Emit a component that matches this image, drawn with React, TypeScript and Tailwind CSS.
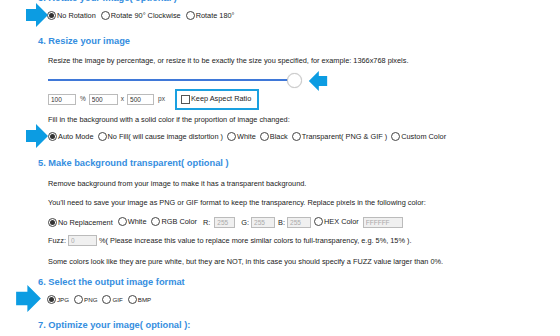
import React from 'react';

const Arrow: React.FC<{ className: string; flip?: boolean }> = ({ className, flip }) => (
  <svg viewBox="0 0 22 24" className={`absolute ${className}`} style={flip ? { transform: 'scaleX(-1)' } : undefined}>
    <polygon points="0,6 10,6 10,0 22,12 10,24 10,18 0,18" fill="#0c9ce2" />
  </svg>
);

const Radio: React.FC<{ checked?: boolean }> = ({ checked }) => (
  <span className="inline-flex w-[9px] h-[9px] rounded-full border border-[#444] items-center justify-center shrink-0 bg-white">
    {checked && <span className="w-[5px] h-[5px] rounded-full bg-[#333]" />}
  </span>
);

const Opt: React.FC<{ checked?: boolean; label: string; small?: boolean }> = ({ checked, label, small }) => (
  <span className="inline-flex items-center gap-[1px]">
    <Radio checked={checked} />
    <span className={small ? 'text-[6.2px]' : ''}>{label}</span>
  </span>
);

const Box: React.FC<{ value: string; w: string; disabled?: boolean }> = ({ value, w, disabled }) => (
  <input
    readOnly
    value={value}
    className={`${w} h-[11px] border border-[#bbb] px-[2px] text-[6.5px] outline-none ${disabled ? 'bg-[#f0f0f0] text-[#aaa]' : 'bg-white text-[#333]'}`}
  />
);

const H: React.FC<{ children: React.ReactNode; mt: string }> = ({ children, mt }) => (
  <div className={`${mt} h-[12px] flex items-center text-[9.3px] font-bold text-[#358ee0] whitespace-nowrap`}>{children}</div>
);

const T: React.FC<{ children: React.ReactNode; mt: string }> = ({ children, mt }) => (
  <div className={`${mt} ml-[10px] h-[12px] flex items-center whitespace-nowrap`}>{children}</div>
);

export default function App() {
  return (
    <div className="relative w-[560px] h-[336px] overflow-hidden bg-white text-[#222] text-[7.35px]" style={{ fontFamily: '"Liberation Sans", Arial, sans-serif' }}>
      <div className="flex flex-col pl-[38px]">
        <H mt="-mt-[7px]">3. Rotate your image( optional )</H>
        <T mt="mt-[5px]">
          <div className="flex items-center gap-[5px] -ml-[1px]">
            <Opt checked label="No Rotation" />
            <Opt label="Rotate 90° Clockwise" />
            <Opt label="Rotate 180°" />
          </div>
        </T>

        <H mt="mt-[14px]">4. Resize your image</H>
        <T mt="mt-[7px]">Resize the image by percentage, or resize it to be exactly the size you specified, for example: 1366x768 pixels.</T>
        <T mt="mt-[7px]">
          <div className="flex items-center">
            <div className="w-[242px] h-[2px] bg-[#3f78d8]" />
            <div className="-ml-[3px] w-[15px] h-[15px] rounded-full bg-white border border-[#c8c8c8] shadow-[0_0_1px_rgba(0,0,0,0.2)]" />
          </div>
        </T>
        <T mt="mt-[7px]">
          <div className="flex items-center text-[6.5px] text-[#444]">
            <Box value="100" w="w-[28px]" />
            <span className="ml-[4px] mr-[3px]">%</span>
            <Box value="500" w="w-[29px]" />
            <span className="ml-[3px] mr-[3px]">x</span>
            <Box value="500" w="w-[27px]" />
            <span className="ml-[4px]">px</span>
            <div className="ml-[10px] w-[84px] h-[21px] border-2 border-[#1aa0e0] flex items-center pl-[4px] gap-[1px] text-[7.35px] text-[#222]">
              <span className="w-[9px] h-[9px] border border-[#555] bg-white" />
              <span>Keep Aspect Ratio</span>
            </div>
          </div>
        </T>
        <T mt="mt-[9px]">Fill in the background with a solid color if the proportion of image changed:</T>
        <T mt="mt-[5px]">
          <div className="flex items-center gap-[4px]">
            <Opt checked label="Auto Mode" />
            <Opt label="No Fill( will cause image distortion )" />
            <Opt label="White" />
            <Opt label="Black" />
            <Opt label="Transparent( PNG & GIF )" />
            <Opt label="Custom Color" />
          </div>
        </T>

        <H mt="mt-[15px]">5. Make background transparent( optional )</H>
        <T mt="mt-[8px]">Remove background from your image to make it has a transparent background.</T>
        <T mt="mt-[7px]">You'll need to save your image as PNG or GIF format to keep the transparency. Replace pixels in the following color:</T>
        <T mt="mt-[7px]">
          <div className="flex items-center">
            <Opt checked label="No Replacement" />
            <span className="ml-[5px]"><Opt label="White" /></span>
            <span className="ml-[5px]"><Opt label="RGB Color" /></span>
            <span className="ml-[6px] mr-[4px]">R:</span>
            <Box value="255" w="w-[21px]" disabled />
            <span className="ml-[6px] mr-[2px]">G:</span>
            <Box value="255" w="w-[24px]" disabled />
            <span className="ml-[3px] mr-[2px]">B:</span>
            <Box value="255" w="w-[24px]" disabled />
            <span className="ml-[3px]"><Opt label="HEX Color" /></span>
            <span className="ml-[4px]"><Box value="FFFFFF" w="w-[40px]" disabled /></span>
          </div>
        </T>
        <T mt="mt-[7px]">
          <div className="flex items-center">
            <span className="mr-[2px]">Fuzz:</span>
            <Box value="0" w="w-[29px]" disabled />
            <span className="ml-[2px]">%( Please increase this value to replace more similar colors to full-transparency, e.g. 5%, 15% ).</span>
          </div>
        </T>
        <T mt="mt-[9px]">Some colors look like they are pure white, but they are NOT, in this case you should specify a FUZZ value larger than 0%.</T>

        <H mt="mt-[9px]">6. Select the output image format</H>
        <T mt="mt-[5px]">
          <div className="flex items-center gap-[5px] -ml-[1px]">
            <Opt checked small label="JPG" />
            <Opt small label="PNG" />
            <Opt small label="GIF" />
            <Opt small label="BMP" />
          </div>
        </T>
        <H mt="mt-[14px]">7. Optimize your image( optional ):</H>
      </div>

      <Arrow className="left-[26px] top-[3px] w-[22px] h-[24px]" />
      <Arrow className="left-[306px] top-[71px] w-[24px] h-[20px]" flip />
      <Arrow className="left-[26px] top-[124px] w-[22px] h-[24px]" />
      <Arrow className="left-[14px] top-[285px] w-[29px] h-[27px]" />
    </div>
  );
}
